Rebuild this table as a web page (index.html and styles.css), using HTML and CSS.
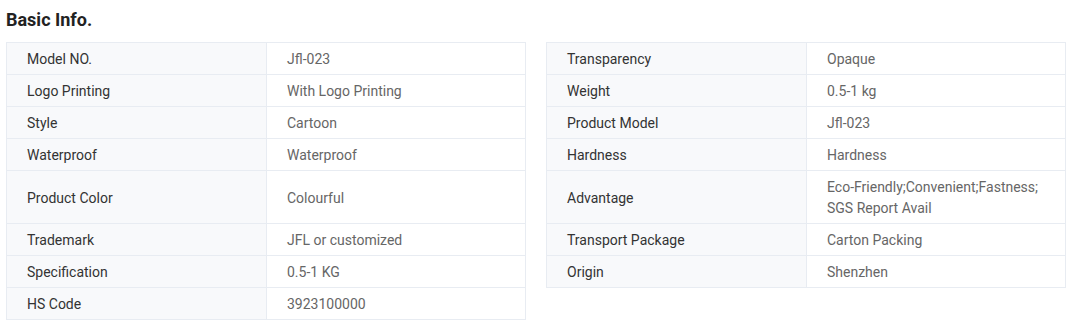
FILE: index.html
```html
<!DOCTYPE html>
<html lang="en">
<head>
<meta charset="utf-8">
<title>Basic Info.</title>
<link rel="stylesheet" href="styles.css">
</head>
<body>
<section class="info">
  <h2 class="title">Basic Info.</h2>
  <div class="grid">
    <div class="row first">
      <div class="pair"><div class="lbl">Model NO.</div><div class="val">Jfl-023</div></div>
      <div class="pair"><div class="lbl">Transparency</div><div class="val">Opaque</div></div>
    </div>
    <div class="row">
      <div class="pair"><div class="lbl">Logo Printing</div><div class="val">With Logo Printing</div></div>
      <div class="pair"><div class="lbl">Weight</div><div class="val">0.5-1 kg</div></div>
    </div>
    <div class="row">
      <div class="pair"><div class="lbl">Style</div><div class="val">Cartoon</div></div>
      <div class="pair"><div class="lbl">Product Model</div><div class="val">Jfl-023</div></div>
    </div>
    <div class="row">
      <div class="pair"><div class="lbl">Waterproof</div><div class="val">Waterproof</div></div>
      <div class="pair"><div class="lbl">Hardness</div><div class="val">Hardness</div></div>
    </div>
    <div class="row">
      <div class="pair"><div class="lbl">Product Color</div><div class="val">Colourful</div></div>
      <div class="pair"><div class="lbl">Advantage</div><div class="val">Eco-Friendly;Convenient;Fastness; SGS Report Avail</div></div>
    </div>
    <div class="row">
      <div class="pair"><div class="lbl">Trademark</div><div class="val">JFL or customized</div></div>
      <div class="pair"><div class="lbl">Transport Package</div><div class="val">Carton Packing</div></div>
    </div>
    <div class="row">
      <div class="pair"><div class="lbl">Specification</div><div class="val">0.5-1 KG</div></div>
      <div class="pair"><div class="lbl">Origin</div><div class="val">Shenzhen</div></div>
    </div>
    <div class="row">
      <div class="pair"><div class="lbl">HS Code</div><div class="val">3923100000</div></div>
      <div class="pair empty"></div>
    </div>
  </div>
</section>
</body>
</html>
```

FILE: styles.css
```css
* { box-sizing: border-box; }
html, body { margin: 0; padding: 0; background: #fff; }
body {
  font-family: Roboto, "Liberation Sans", Arial, sans-serif;
  font-size: 14px;
  color: #333;
}
.info { padding: 0 6px; }
.title {
  margin: 0;
  padding-top: 9px;
  height: 42px;
  font-size: 18px;
  line-height: 22px;
  font-weight: 700;
  color: #222;
}
.grid { display: flex; flex-direction: column; }
.row { display: flex; gap: 20px; }
.pair {
  display: flex;
  width: 520px;
  border-left: 1px solid #e8ecf2;
}
.row.first .pair { border-top: 1px solid #e8ecf2; }
.pair.empty { border: 0; }
.lbl, .val {
  padding: 6px 20px 4px 20px;
  line-height: 21px;
  border-right: 1px solid #e8ecf2;
  border-bottom: 1px solid #e8ecf2;
  display: flex;
  align-items: center;
}
.lbl {
  width: 260px;
  background: #f8f9fb;
  color: #333;
}
.val {
  width: 259px;
  color: #666;
}
```
